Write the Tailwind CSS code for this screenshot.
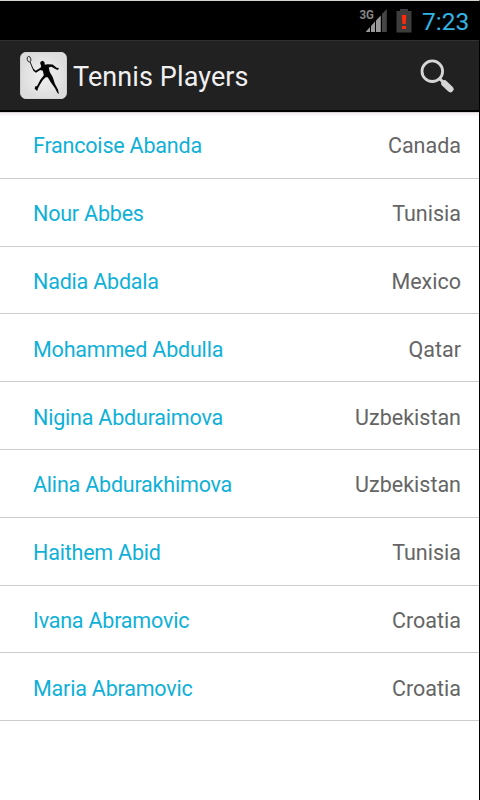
<!DOCTYPE html>
<html lang="en">
<head>
<meta charset="utf-8">
<title>Tennis Players</title>
<script src="https://cdn.jsdelivr.net/npm/@tailwindcss/browser@4"></script>
</head>
<body class="bg-white font-[Roboto,sans-serif]">
<div class="flex h-[800px] w-[480px] flex-col overflow-hidden border-t border-r border-t-[#d8d4d0] border-r-black bg-white">
  <div class="flex h-[39px] shrink-0 items-center bg-black pl-[359px]">
    <svg class="h-[39px] w-7 shrink-0" viewBox="359 1 28 39">
      <text x="359.500" y="18.500" font-size="12.500" font-weight="700" fill="#858585" textLength="14.500" lengthAdjust="spacingAndGlyphs">3G</text>
      <path d="M366 32V31.500L370 27V32Z M371 32V26L375 21.500V32Z M376 32V20.500L380.800 15.500V32Z" fill="#999"/>
      <path d="M382 32V14L386.800 9V32Z" fill="#454545"/>
    </svg>
    <svg class="ml-[9px] h-[39px] w-4 shrink-0" viewBox="396 1 16 39">
      <path d="M400 9H408V11H411.500V32.500H396.500V11H400Z" fill="#3d3d3d"/>
      <path d="M401.800 15H406.300L405.600 24H402.500Z M402 26H406V29H402Z" fill="#ff2a0c"/>
    </svg>
    <div class="ml-[10px] whitespace-nowrap pt-0.5 text-[24.5px] leading-[39px] text-[#33b5e5]">7:23</div>
  </div>
  <div class="flex h-[72px] shrink-0 items-center border-t border-b-2 border-t-[#303030] border-b-black bg-[#212121] pl-[20px]">
    <svg class="h-[47px] w-[47px] shrink-0" viewBox="58 66 142 143">
      <defs><radialGradient id="tile"><stop offset="0" stop-color="#f0f0f0"/><stop offset=".7" stop-color="#e4e4e4"/><stop offset="1" stop-color="#dcdcdc"/></radialGradient></defs>
      <rect x="59" y="67" width="140" height="141" rx="17" fill="url(#tile)" stroke="#f5f5f5" stroke-width="2"/>
      <ellipse cx="85" cy="88" rx="5.500" ry="8.500" fill="none" stroke="#111" stroke-width="2.500" transform="rotate(-15 85 88)"/>
      <path d="M88 96L96 115" stroke="#111" stroke-width="3" fill="none"/>
      <path d="M93 111L105 123L120 114L122 108L119 102L120 96L127 93L132 97L133 105L142 103L157 104L169 114L176 115L173 121L168 119L153 111L145 113L148 127L157 142L164 163L173 180L176 194L171 190L164 176L151 158L142 143L136 143L127 151L118 166L112 177L110 185L102 178L104 170L109 170L119 151L130 137L127 123L119 121L106 129L98 123Z" fill="#050505"/>
    </svg>
    <div class="ml-[6px] whitespace-nowrap pt-[3px] text-[27px] leading-9 tracking-[0.1px] text-[#f0f0f0]">Tennis Players</div>
    <svg class="ml-auto mr-[23px] h-9 w-9 shrink-0" viewBox="420 58 36 36">
      <circle cx="432.300" cy="71.200" r="10.300" fill="none" stroke="#d6d6d6" stroke-width="2.800"/>
      <path d="M439 78L443 82" stroke="#d6d6d6" stroke-width="3"/>
      <path d="M444.500 83.500L450.300 89" stroke="#d6d6d6" stroke-width="6.500" stroke-linecap="round"/>
    </svg>
  </div>
  <div class="h-[5px] shrink-0 bg-linear-to-b from-[#c9c5c9] via-[#f3eff3] via-30% to-white"></div>
  <ul id="list" class="-mt-[6px] flex flex-col text-[21.5px] leading-[26px]"></ul>
</div>
<template id="row">
  <li class="flex h-[67.8px] shrink-0 items-center justify-between border-b border-[#cccccc] pt-[4px] pl-[33px] pr-[18px]">
    <span class="whitespace-nowrap tracking-[-0.2px] text-[#0fb0d8]"></span>
    <span class="whitespace-nowrap text-[#656565]"></span>
  </li>
</template>
<script>
const players = [["Francoise Abanda","Canada"],["Nour Abbes","Tunisia"],["Nadia Abdala","Mexico"],["Mohammed Abdulla","Qatar"],["Nigina Abduraimova","Uzbekistan"],["Alina Abdurakhimova","Uzbekistan"],["Haithem Abid","Tunisia"],["Ivana Abramovic","Croatia"],["Maria Abramovic","Croatia"]];
const list = document.getElementById("list"), row = document.getElementById("row");
for (const [name, country] of players) {
  const item = row.content.cloneNode(true), cells = item.querySelectorAll("span");
  cells[0].textContent = name;
  cells[1].textContent = country;
  list.append(item);
}
</script>
</body>
</html>
